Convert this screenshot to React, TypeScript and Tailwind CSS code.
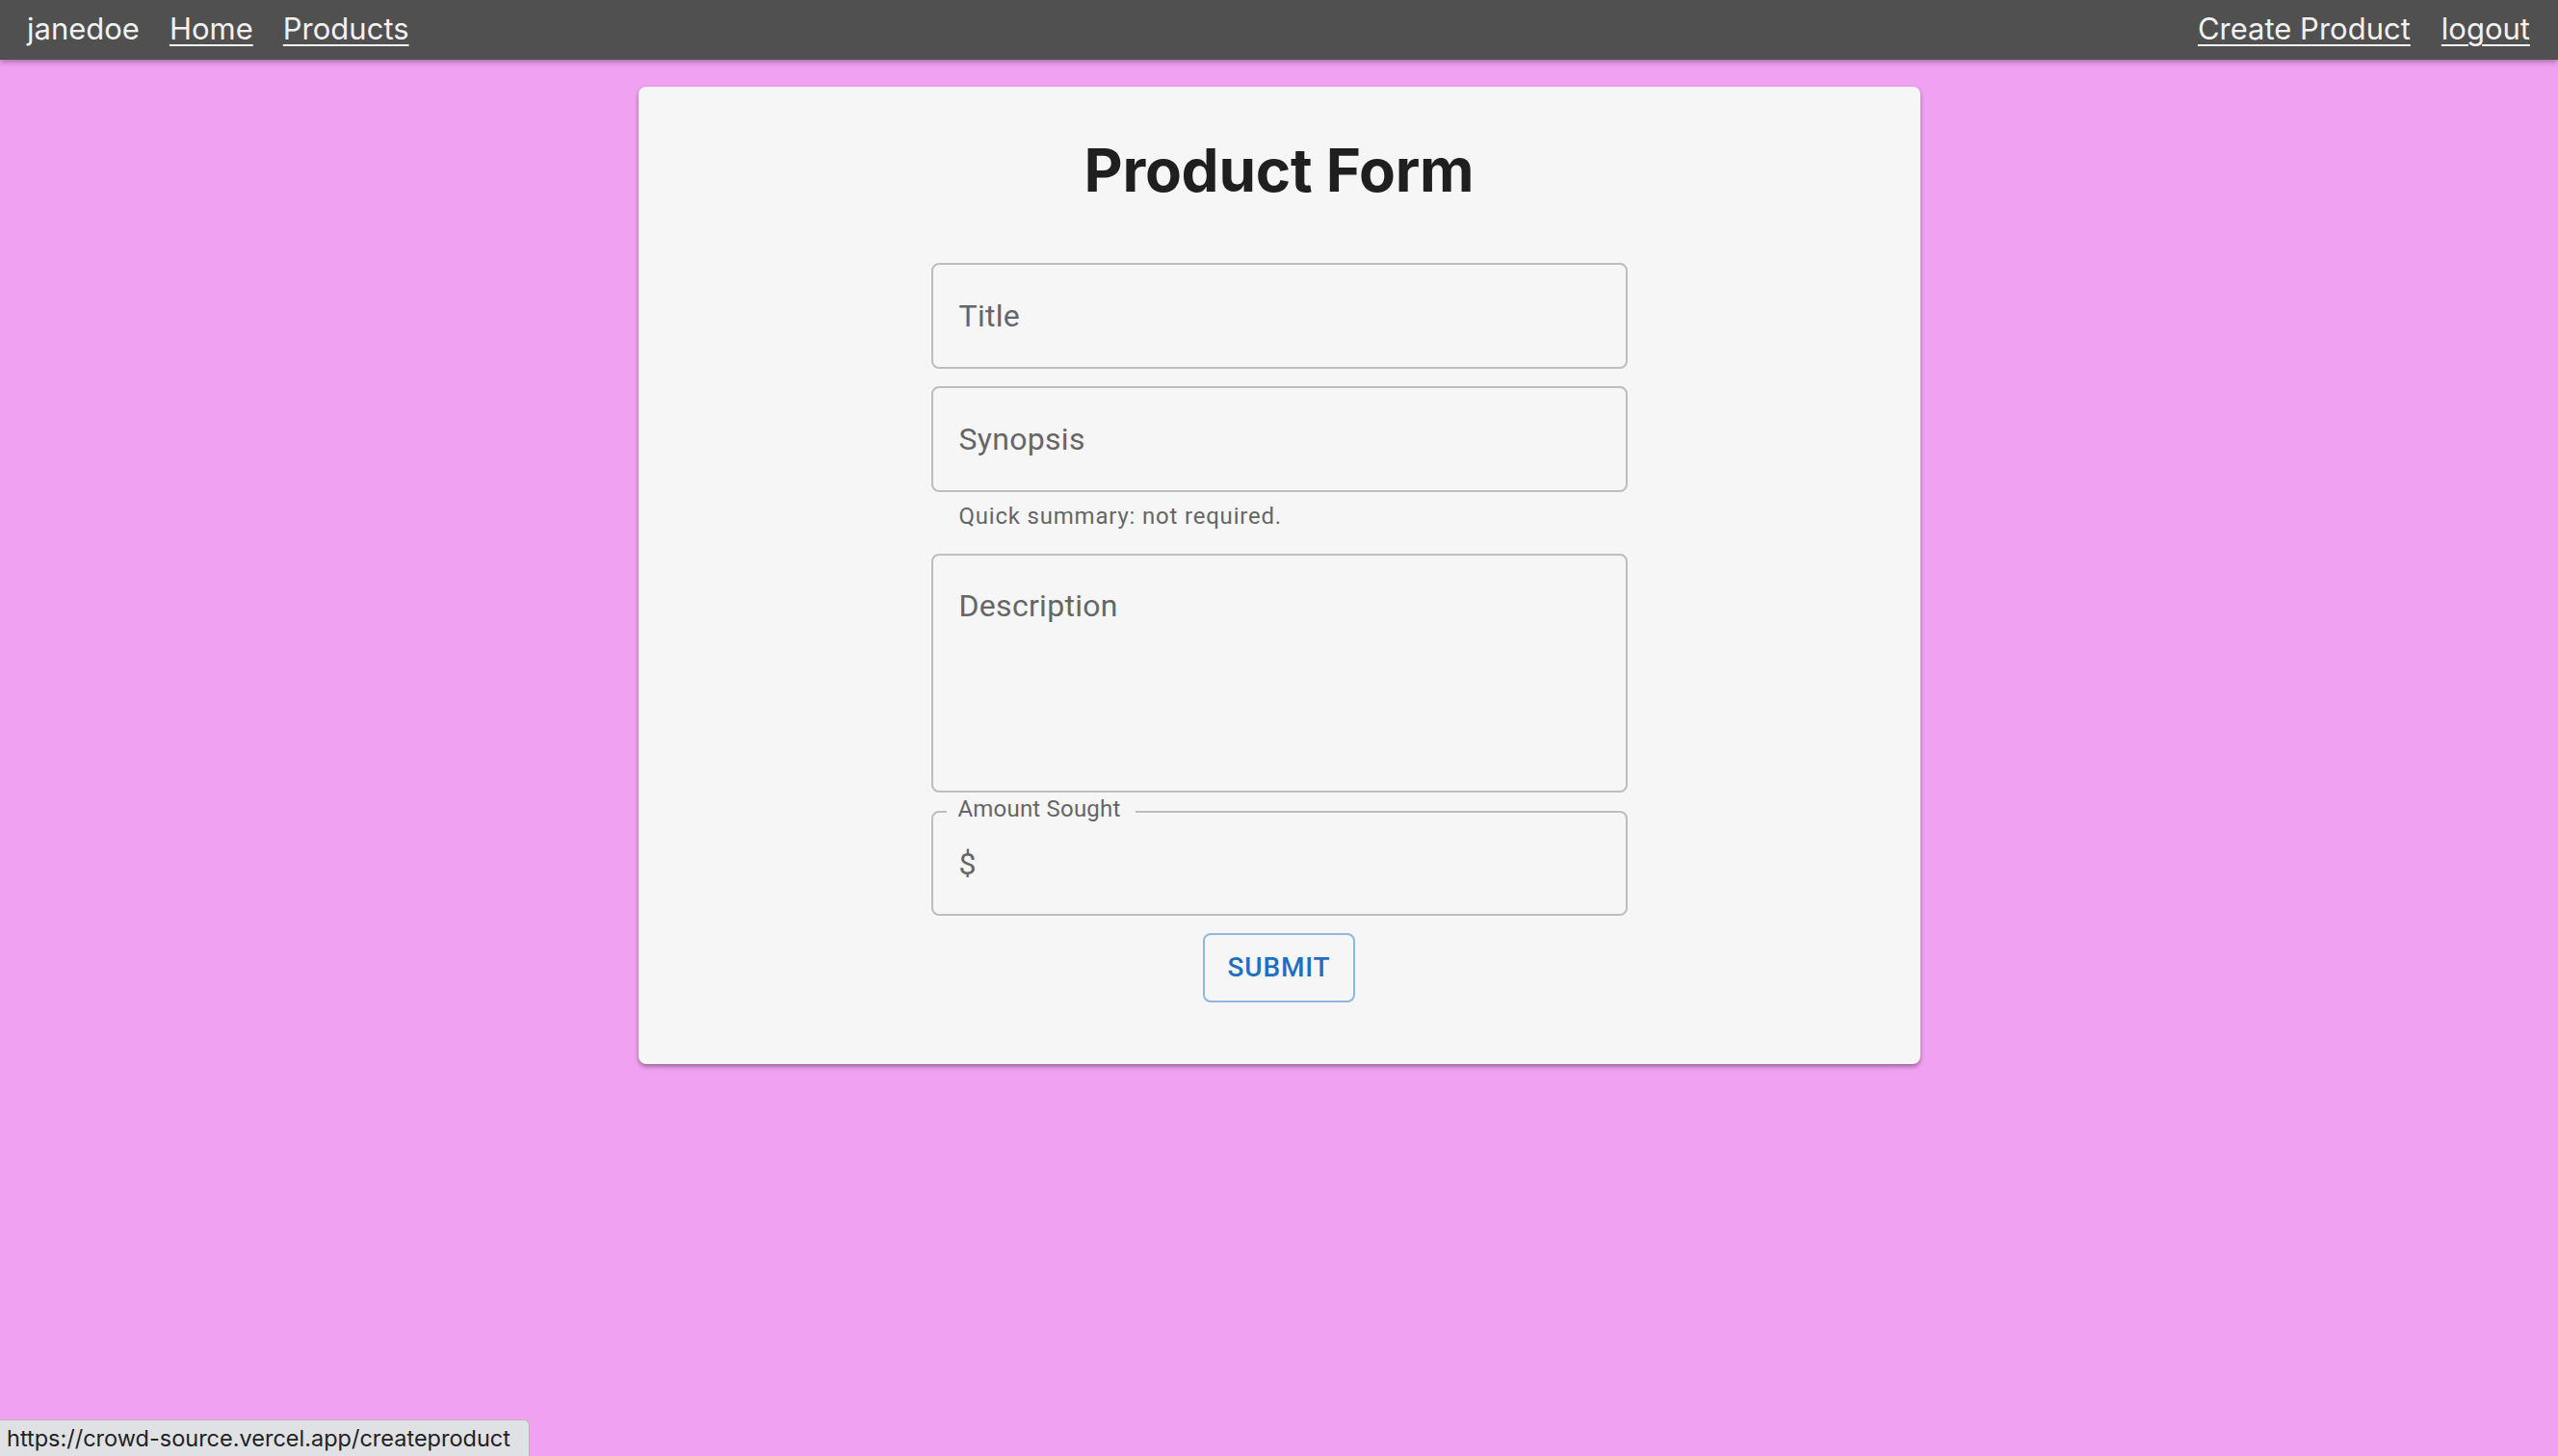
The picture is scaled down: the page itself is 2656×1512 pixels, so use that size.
import React from "react";

const roboto = { fontFamily: "Roboto, 'Liberation Sans', sans-serif" } as const;
const inter = { fontFamily: "Inter, 'Liberation Sans', sans-serif" } as const;

function Field({ label, tall }: { label: string; tall?: boolean }) {
  if (tall) {
    return (
      <div className="h-[248px] w-full rounded-[8px] border-2 border-[#bdbdbd] pl-[27px] pt-[32px]">
        <span className="block text-[32px] leading-[40px] tracking-[0.3px] text-[#666666]" style={roboto}>
          {label}
        </span>
      </div>
    );
  }
  return (
    <div className="flex h-[110px] w-full items-center rounded-[8px] border-2 border-[#bdbdbd] pl-[27px]">
      <span className="text-[32px] leading-[40px] tracking-[0.3px] text-[#666666]" style={roboto}>
        {label}
      </span>
    </div>
  );
}

export default function App() {
  return (
    <div className="relative min-h-screen w-full bg-[#f1a1f1]">
      <nav
        className="flex h-[62px] items-center justify-between bg-[#505050] pl-[28px] pr-[29px] pb-[3px] text-[31px] leading-none text-[#f2f2f2] shadow-[0_2px_6px_rgba(0,0,0,0.35)]"
        style={inter}
      >
        <div className="flex items-center gap-[31px]">
          <span>janedoe</span>
          <a href="#" className="underline decoration-[2px] underline-offset-[5px]">Home</a>
          <a href="#" className="underline decoration-[2px] underline-offset-[5px]">Products</a>
        </div>
        <div className="flex items-center gap-[32px]">
          <a href="#" className="underline decoration-[2px] underline-offset-[5px]">Create Product</a>
          <a href="#" className="underline decoration-[2px] underline-offset-[5px]">logout</a>
        </div>
      </nav>

      <main className="flex justify-center pt-[28px]">
        <div className="w-[1331px] rounded-[8px] bg-[#f6f6f6] pt-[56px] pb-[64px] shadow-[0_3px_5px_rgba(0,0,0,0.28),0_1px_3px_rgba(0,0,0,0.14)]">
          <h1
            className="mb-[65px] text-center text-[62px] font-bold leading-[62px] tracking-[-0.3px] text-[#1f1f1f]"
            style={inter}
          >
            Product Form
          </h1>
          <div className="mx-auto flex w-[723px] flex-col items-stretch">
            <Field label="Title" />
            <div className="mt-[18px]">
              <Field label="Synopsis" />
            </div>
            <p
              className="mt-[5px] pl-[29px] text-[24px] leading-[40px] tracking-[0.8px] text-[#666666]"
              style={roboto}
            >
              Quick summary: not required.
            </p>
            <div className="mt-[19px]">
              <Field label="Description" tall />
            </div>
            <div className="relative mt-[19px] flex h-[109px] items-center rounded-[8px] border-2 border-[#bdbdbd] pl-[27px]">
              <span
                className="absolute left-[14px] top-[-16px] bg-[#f6f6f6] pl-[12px] pr-[15px] text-[24px] leading-[24px] tracking-[0.2px] text-[#666666]"
                style={roboto}
              >
                Amount Sought
              </span>
              <span className="text-[32px] leading-[40px] text-[#666666]" style={roboto}>
                $
              </span>
            </div>
            <div className="mt-[18px] flex justify-center">
              <button
                className="flex h-[72px] w-[158px] items-center justify-center rounded-[8px] border-2 border-[#8db7e5] text-[28px] font-medium uppercase tracking-[0.8px] text-[#1f6fc1]"
                style={roboto}
              >
                Submit
              </button>
            </div>
          </div>
        </div>
      </main>

      <div
        className="fixed bottom-0 left-0 flex h-[38px] w-[550px] items-center rounded-tr-[6px] border-t border-r border-[#b5b5b5] bg-[#dfe1e5] pl-[7px] text-[23.5px] leading-none text-[#222222]"
        style={inter}
      >
        https://crowd-source.vercel.app/createproduct
      </div>
    </div>
  );
}
